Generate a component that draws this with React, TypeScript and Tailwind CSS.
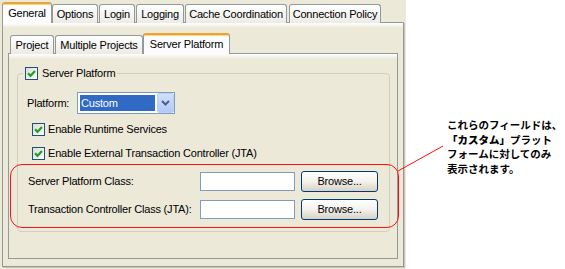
import React from 'react';

const ui = "font-['Liberation_Sans',Arial,sans-serif] text-[11px] tracking-[-0.2px] text-black";

const Check = () => (
  <span className="flex h-[13px] w-[13px] shrink-0 items-center justify-center border border-[#1c5180] bg-gradient-to-br from-[#dcdcd7] to-white">
    <svg width="11" height="11" viewBox="0 0 11 11">
      <path d="M2 5.2 L4.5 7.8 L9 3" fill="none" stroke="#21a121" strokeWidth="2.2" />
    </svg>
  </span>
);

type TabProps = { label: string; className: string; selected?: boolean };

const Tab = ({ label, className, selected }: TabProps) =>
  selected ? (
    <div
      className={`relative z-10 flex h-[21px] items-center justify-center rounded-t-[3px] border-x border-t-2 border-x-[#919b9c] border-t-[#e9a33b] bg-[#fcfcfe] pb-[1px] shadow-[inset_0_1px_0_#ffd57a] ${className}`}
    >
      {label}
    </div>
  ) : (
    <div
      className={`flex h-[19px] items-center justify-center rounded-t-[3px] border-x border-t border-[#919b9c] bg-gradient-to-b from-white to-[#ecebe6] ${className}`}
    >
      {label}
    </div>
  );

const BrowseRow = ({ label }: { label: string }) => (
  <div className="flex h-[21px] items-center pl-[10px]">
    <span className="w-[172px]">{label}</span>
    <div className="h-[19px] w-[95px] border border-[#7f9db9] bg-white" />
    <button className="ml-[6px] h-[21px] w-[77px] rounded-[3px] border border-[#003c74] bg-gradient-to-b from-white via-[#f3f2ec] to-[#d8d2c6] text-[11px]">
      Browse...
    </button>
  </div>
);

export default function App() {
  return (
    <div className={`relative flex h-[269px] w-[565px] bg-white ${ui}`}>
      {/* dialog */}
      <div className="h-full w-[406px] bg-[#ece9d8] pl-[2px] pt-[2px]">
        <div className="flex h-[21px] items-end">
          <Tab label="General" className="w-[50px]" selected />
          <Tab label="Options" className="w-[46px]" />
          <Tab label="Login" className="ml-[1px] w-[36px]" />
          <Tab label="Logging" className="ml-[1px] w-[48px]" />
          <Tab label="Cache Coordination" className="ml-[1px] w-[102px]" />
          <Tab label="Connection Policy" className="ml-[2px] w-[92px]" />
        </div>

        <div className="-mt-px h-[245px] w-[402px] border border-[#919b9c] bg-[linear-gradient(#fff,#ece9d8_5px)] pl-[5px] pt-[10px] shadow-[1px_1px_0_#c9c5b3]">
          <div className="flex h-[21px] items-end pl-[2px]">
            <Tab label="Project" className="w-[44px]" />
            <Tab label="Multiple Projects" className="ml-[1px] w-[88px]" />
            <Tab label="Server Platform" className="w-[87px]" selected />
          </div>

          <div className="-mt-px h-[206px] w-[390px] border border-[#919b9c] bg-[linear-gradient(#fff,#ece9d8_5px)]">
            <fieldset className="ml-[8px] mt-[13px] w-[373px] rounded-[4px] border border-[#d0d0bf] pb-[11px]">
              <legend className="ml-[5px] flex h-[13px] items-center gap-[4px] px-[2px]">
                <Check />
                <span>Server Platform</span>
              </legend>

              <div className="mt-[12px] flex h-[22px] items-center pl-[9px]">
                <span className="w-[50px]">Platform:</span>
                <div className="flex h-[22px] w-[98px] border border-[#7f9db9] bg-white">
                  <div className="m-[2px] flex flex-1 items-center bg-[#316ac5] pl-[1px] text-white">Custom</div>
                  <div className="flex w-[17px] items-center justify-center rounded-[2px] border border-[#b9d1fa] bg-gradient-to-b from-[#d2e0fc] to-[#b4c8f6]">
                    <svg width="9" height="6" viewBox="0 0 9 6">
                      <path d="M1 1 L4.5 4.5 L8 1" fill="none" stroke="#4d6185" strokeWidth="2" />
                    </svg>
                  </div>
                </div>
              </div>

              <div className="mt-[9px] flex h-[13px] items-center gap-[3px] pl-[14px]">
                <Check />
                <span>Enable Runtime Services</span>
              </div>
              <div className="mt-[11px] flex h-[13px] items-center gap-[3px] pl-[14px]">
                <Check />
                <span>Enable External Transaction Controller (JTA)</span>
              </div>

              <div className="mt-[11px]">
                <BrowseRow label="Server Platform Class:" />
              </div>
              <div className="mt-[7px]">
                <BrowseRow label="Transaction Controller Class (JTA):" />
              </div>
            </fieldset>
          </div>
        </div>
      </div>

      {/* callout */}
      <div className="flex-1 pl-[41px] pt-[118px]">
        <div className="whitespace-nowrap font-['Noto_Sans_CJK_JP',sans-serif] text-[10.5px] font-semibold leading-[14.5px] tracking-normal text-black">
          <p>これらのフィールドは、</p>
          <p>
            <span className="font-black">「カスタム」</span>プラット
          </p>
          <p>フォームに対してのみ</p>
          <p>表示されます。</p>
        </div>
      </div>

      <div className="pointer-events-none absolute left-[10px] top-[164px] h-[64px] w-[389px] rounded-[12px] border-[1.5px] border-[#ff1010]" />
      <svg className="pointer-events-none absolute left-[396px] top-[144px]" width="50" height="30" viewBox="0 0 50 30">
        <line x1="2" y1="27" x2="47" y2="2" stroke="#ff1010" strokeWidth="1" />
      </svg>
    </div>
  );
}
